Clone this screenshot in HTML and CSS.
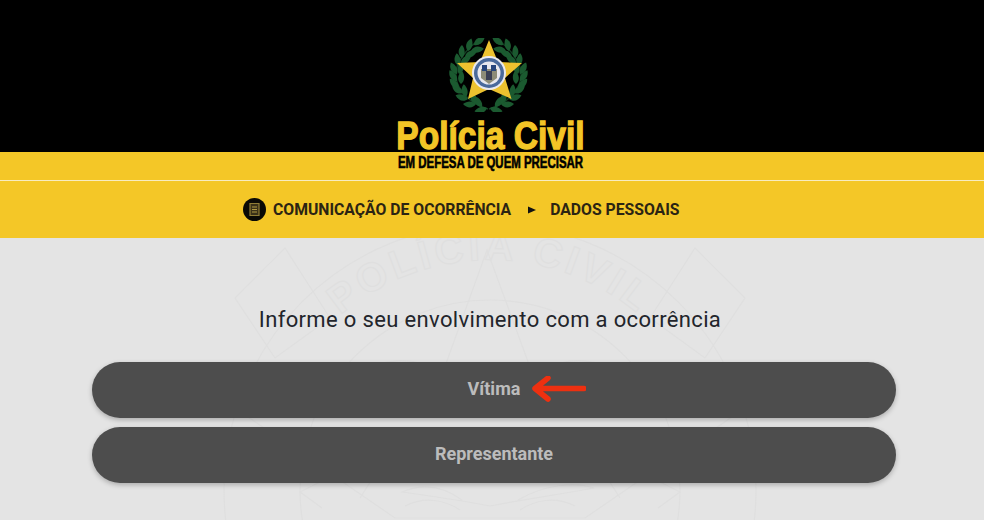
FILE: index.html
```html
<!DOCTYPE html>
<html lang="pt-BR">
<head>
<meta charset="utf-8">
<title>Polícia Civil</title>
<link rel="stylesheet" href="styles.css">
</head>
<body>
<header class="masthead">
  <div class="brand">
    <svg class="emblem" viewBox="0 0 80 74" aria-hidden="true">
      <defs>
        <path id="leaf" d="M0 0C3-4.500 9-4.500 13 0 9 3.500 3 3.500 0 0Z"/>
        <g id="branch">
          <path class="stem" d="M39 71C26 67 15 59 9 47 4 35 7 21 26 5"/>
          <use href="#leaf" transform="translate(38 70) rotate(-195)"/>
          <use href="#leaf" transform="translate(33 69) rotate(-125)"/>
          <use href="#leaf" transform="translate(27 66) rotate(-180)"/>
          <use href="#leaf" transform="translate(27 66) rotate(-110)"/>
          <use href="#leaf" transform="translate(19 61) rotate(-163)"/>
          <use href="#leaf" transform="translate(14 55) rotate(-146)"/>
          <use href="#leaf" transform="translate(17 59) rotate(-100)"/>
          <use href="#leaf" transform="translate(10 50) rotate(-135)"/>
          <use href="#leaf" transform="translate(12 46) rotate(-85)"/>
          <use href="#leaf" transform="translate(8 43) rotate(-125)"/>
          <use href="#leaf" transform="translate(8 36) rotate(-118)"/>
          <use href="#leaf" transform="translate(10 36) rotate(-70)"/>
          <use href="#leaf" transform="translate(10 28) rotate(-100)"/>
          <use href="#leaf" transform="translate(12 26) rotate(-40)"/>
          <use href="#leaf" transform="translate(13 20) rotate(-90)"/>
          <use href="#leaf" transform="translate(16 19) rotate(-25)"/>
          <use href="#leaf" transform="translate(19 13) rotate(-75)"/>
          <use href="#leaf" transform="translate(22 13) rotate(-10)"/>
          <use href="#leaf" transform="translate(25 7) rotate(-35)"/>
        </g>
      </defs>
      <g class="wreath">
        <use href="#branch"/>
        <use href="#branch" transform="translate(79 0) scale(-1 1)"/>
      </g>
      <polygon class="star" points="40,2 49,24 73,25 56,40 62.500,61 40,51 19,61 24,40 8,25 31,24"/>
      <circle cx="40" cy="35" r="17" fill="#e9e9ef"/>
      <circle cx="40" cy="35" r="15" fill="#4a6a9c"/>
      <circle cx="40" cy="35" r="11.500" fill="#e8e8ee"/>
      <path d="M32 31h16v9l-8 6-8-6z" fill="#8d8c78"/>
      <path d="M33 27h5v6h-5zM42 27h5v6h-5z" fill="#27457c"/>
      <path d="M37 33h6v9h-6z" fill="#3a3f55"/>
    </svg>
    <div class="brand-name">Polícia Civil</div>
    <div class="brand-motto">EM DEFESA DE QUEM PRECISAR</div>
  </div>
</header>
<div class="band">
  <div class="band-top"></div>
  <nav class="crumbs">
    <span class="crumb-icon">
      <svg viewBox="0 0 23 23" aria-hidden="true">
        <path d="M7 5.500h9v12H7z" fill="#3a3218" stroke="#8f7d36" stroke-width="1.200"/>
        <path d="M9 9h5M9 11.500h5M9 14h5" stroke="#b09a44" stroke-width="1.200"/>
      </svg>
    </span>
    <span class="crumb">COMUNICAÇÃO DE OCORRÊNCIA</span>
    <svg class="crumb-sep" viewBox="0 0 8 8" aria-hidden="true"><path d="M0 .5 8 4 0 7.500z"/></svg>
    <span class="crumb">DADOS PESSOAIS</span>
  </nav>
</div>
<main class="content">
  <svg class="seal" viewBox="0 0 984 282" aria-hidden="true">
    <defs><path id="seal-arc" d="M260 252A230 230 0 0 1 720 252"/></defs>
    <circle cx="490" cy="252" r="266"/>
    <circle cx="490" cy="252" r="190"/>
    <polygon points="487,12 545,170 745,170 585,280 395,280 235,170 430,170"/>
    <path d="M345 150C375 120 400 120 420 125 400 160 375 165 345 150ZM635 150C605 120 580 120 560 125 580 160 605 165 635 150ZM285 10 235 60 275 120 330 80ZM695 10 745 60 705 120 650 80ZM360 260C385 220 400 200 440 190M620 260C595 220 580 200 540 190"/>
    <path d="M490 268C460 262 430 258 402 254 420 246 440 246 462 262M490 268C520 262 550 258 594 250 575 244 545 246 518 262M405 268C425 258 445 262 460 272M575 268C555 258 535 262 520 272M320 244 300 254 322 270M660 244 680 254 658 270"/>
    <text><textPath href="#seal-arc" startOffset="50%" text-anchor="middle">POLÍCIA CIVIL</textPath></text>
  </svg>
  <h1 class="prompt">Informe o seu envolvimento com a ocorrência</h1>
  <div class="choices">
    <button class="choice" type="button"><span class="choice-label">Vítima</span>
      <svg class="pointer" viewBox="0 0 56 26" aria-hidden="true"><path d="M54 12.500H6M18 2 5 12.500 18 23"/></svg>
    </button>
    <button class="choice" type="button"><span class="choice-label">Representante</span></button>
  </div>
</main>
</body>
</html>
```
FILE: styles.css
```css
* { box-sizing: border-box; }
html, body { margin: 0; height: 520px; overflow: hidden; }
body { background: #e4e4e4; font-family: Roboto, "Liberation Sans", sans-serif; }

.masthead { position: relative; z-index: 2; height: 152px; background: #000; }
.brand {
  position: absolute;
  left: 396px;
  top: 38px;
  width: 188px;
  height: 132px;
  display: flex;
  flex-direction: column;
  align-items: center;
}
.emblem { width: 80px; height: 74px; margin-left: -3px; flex: none; }
.wreath { fill: #1b5a30; }
.stem { fill: none; stroke: #123f22; stroke-width: 1.500; }
.star { fill: #edc22f; }
.brand-name {
  margin-top: 4px;
  font-family: "Liberation Sans", Arial, sans-serif;
  font-weight: 700;
  font-size: 39px;
  line-height: 40px;
  white-space: nowrap;
  color: #f3c526;
  -webkit-text-stroke: 1.300px #f3c526;
  transform: scale(.86, 1);
}
.brand-motto {
  margin-top: -2px;
  font-family: "Liberation Sans", Arial, sans-serif;
  font-weight: 700;
  font-size: 16px;
  line-height: 18px;
  white-space: nowrap;
  color: #000;
  -webkit-text-stroke: .6px #000;
  transform: scaleX(.715);
}

.band { background: #f4c727; }
.band-top { height: 29px; border-bottom: 1px solid #f8ecc0; }
.crumbs {
  height: 57px;
  padding-left: 243px;
  display: flex;
  align-items: center;
  color: #2b2413;
  font-size: 15.750px;
  font-weight: 700;
  white-space: nowrap;
}
.crumb-icon { width: 23px; height: 23px; border-radius: 50%; background: #0a0a05; margin-right: 7px; flex: none; }
.crumb-icon svg { display: block; width: 23px; height: 23px; }
.crumb-sep { width: 8px; height: 8px; margin: 0 14px 0 17px; fill: #111; flex: none; }

.content { position: relative; height: 282px; overflow: hidden; }
.seal { position: absolute; left: 0; top: 0; width: 984px; height: 282px; fill: none; stroke: #dfdfdf; stroke-width: 1.200; }
.seal text {
  font-family: "Liberation Sans", Arial, sans-serif;
  font-size: 40px;
  font-weight: 700;
  letter-spacing: 4px;
}
.prompt {
  position: relative;
  margin: 0;
  padding: 69px 4px 0 0;
  text-align: center;
  font-size: 22px;
  font-weight: 400;
  line-height: 26px;
  letter-spacing: .35px;
  color: #22252b;
}
.choices {
  position: relative;
  margin: 29px 88px 0 92px;
  display: flex;
  flex-direction: column;
  gap: 9px;
}
.choice {
  position: relative;
  height: 56px;
  border: 0;
  border-radius: 28px;
  padding: 0 0 4px;
  background: #4d4d4d;
  box-shadow: 0 2px 5px rgba(0, 0, 0, .25);
  color: #bcbcbc;
  font-family: inherit;
  font-size: 18px;
  font-weight: 700;
}
.pointer {
  position: absolute;
  left: 438px;
  top: 14px;
  width: 56px;
  height: 26px;
  fill: none;
  stroke: #ee3010;
  stroke-width: 5.500;
  stroke-linecap: round;
  stroke-linejoin: round;
}
```
